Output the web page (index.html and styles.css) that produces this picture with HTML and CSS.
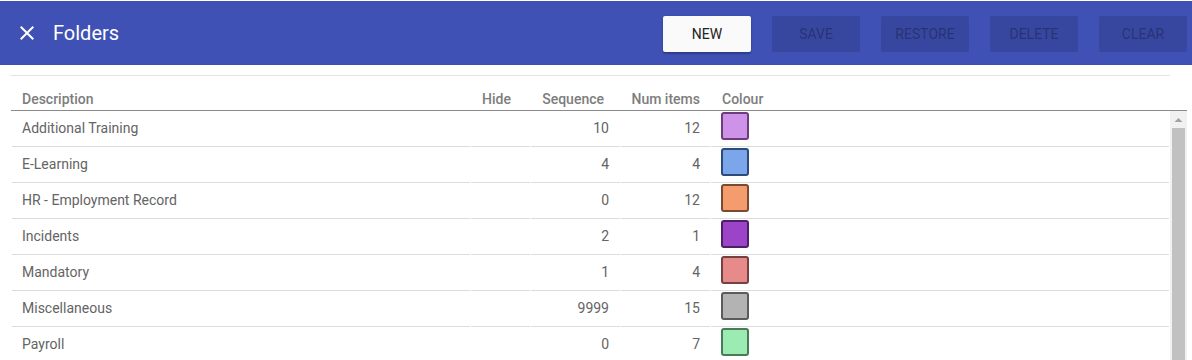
FILE: index.html
```html
<!DOCTYPE html>
<html lang='en'>

<head>
    <meta charset='UTF-8'>
    <meta name='viewport' content='width=device-width, initial-scale=1.0'>
    <title>Folders</title>
    <link rel="stylesheet" href="styles.css">
</head>

<body>
    <header class="toolbar">
        <button type="button" class="close-btn" aria-label="Close">
            <svg width="24" height="24" viewBox="0 0 24 24">
                <path d="M19 6.41 17.59 5 12 10.59 6.41 5 5 6.41 10.59 12 5 17.59 6.41 19 12 13.41 17.59 19 19 17.59 13.41 12z" fill="#fff"/>
            </svg>
        </button>
        <h1 class="title">Folders</h1>
        <div class="actions">
            <button type="button" class="btn btn-primary">NEW</button>
            <button type="button" class="btn" disabled>SAVE</button>
            <button type="button" class="btn" disabled>RESTORE</button>
            <button type="button" class="btn" disabled>DELETE</button>
            <button type="button" class="btn" disabled>CLEAR</button>
        </div>
    </header>
    <main class="content">
        <div class="grid-head">
            <table class="grid">
                <colgroup>
                    <col class="c-desc"><col class="c-hide"><col class="c-seq"><col class="c-num"><col>
                </colgroup>
                <thead>
                    <tr>
                        <th class="h-desc">Description</th>
                        <th class="h-hide">Hide</th>
                        <th class="h-seq">Sequence</th>
                        <th class="h-num">Num items</th>
                        <th class="h-col">Colour</th>
                    </tr>
                </thead>
            </table>
        </div>
        <div class="grid-body">
            <div class="grid-scroll">
                <table class="grid">
                    <colgroup>
                        <col class="c-desc"><col class="c-hide"><col class="c-seq"><col class="c-num"><col>
                    </colgroup>
                    <tbody id="rows"></tbody>
                </table>
            </div>
            <div class="scrollbar">
                <div class="scroll-arrow">
                    <svg width="17" height="17" viewBox="0 0 17 17"><path d="M4.5 11h8l-4-4z" fill="#a3a3a3"/></svg>
                </div>
                <div class="scroll-thumb"></div>
            </div>
        </div>
    </main>
    <script>
        const folders = [
            { name: 'Additional Training', seq: 10, items: 12, fill: '#ce93e8', edge: '#6a3f79' },
            { name: 'E-Learning', seq: 4, items: 4, fill: '#7ba7ea', edge: '#2e4a78' },
            { name: 'HR - Employment Record', seq: 0, items: 12, fill: '#f59c6e', edge: '#7b4a33' },
            { name: 'Incidents', seq: 2, items: 1, fill: '#9c44c8', edge: '#4d1f66' },
            { name: 'Mandatory', seq: 1, items: 4, fill: '#e68a8a', edge: '#744242' },
            { name: 'Miscellaneous', seq: 9999, items: 15, fill: '#b3b3b3', edge: '#5b5b5b' },
            { name: 'Payroll', seq: 0, items: 7, fill: '#9bebb3', edge: '#4a7a58' },
        ];

        const rows = document.querySelector('#rows');
        folders.forEach(f => {
            const tr = document.createElement('tr');
            tr.innerHTML = `
                <td class="d-desc">${f.name}</td>
                <td></td>
                <td class="d-seq">${f.seq}</td>
                <td class="d-num">${f.items}</td>
                <td class="d-col"><span class="swatch" style="background:${f.fill};border-color:${f.edge}"></span></td>`;
            rows.appendChild(tr);
        });
    </script>
</body>

</html>
```

FILE: styles.css
```css
* {
    padding: 0;
    margin: 0;
    box-sizing: border-box;
}

html,
body {
    height: 100%;
    overflow: hidden;
}

body {
    font-family: Roboto, "Liberation Sans", sans-serif;
    font-size: 14px;
    color: #646464;
    background: #fff;
    padding-top: 1px;
    display: flex;
    flex-direction: column;
}

button {
    font: inherit;
}

.toolbar {
    flex-shrink: 0;
    height: 64px;
    background-color: #3f51b5;
    display: flex;
    align-items: center;
    padding: 0 5px 0 15px;
}

.close-btn {
    width: 24px;
    height: 24px;
    border: none;
    background: none;
    display: flex;
    margin-right: 14px;
    margin-top: -1px;
}

.title {
    font-size: 20px;
    font-weight: 400;
    color: #fff;
    flex-grow: 1;
    margin-top: -1px;
}

.actions {
    display: flex;
    gap: 21px;
}

.btn {
    width: 88px;
    height: 36px;
    border: none;
    border-radius: 2px;
    font-size: 14px;
    font-weight: 400;
    background-color: rgba(0, 0, 0, .12);
    color: rgba(0, 0, 0, .3);
    margin-top: 1px;
}

.btn-primary {
    background-color: #fafafa;
    color: #222;
    box-shadow: 0 2px 2px rgba(0, 0, 0, .24), 0 0 2px rgba(0, 0, 0, .12);
}

.content {
    flex-grow: 1;
    min-height: 0;
    padding: 10px 5px 0 11px;
    display: flex;
    flex-direction: column;
}

.grid-head {
    border-bottom: 1px solid #8a8a8a;
}

.grid-head .grid {
    width: calc(100% - 17px);
    border-top: 1px solid #e3e3e3;
}

.grid {
    width: 100%;
    table-layout: fixed;
    border-collapse: separate;
    border-spacing: 1px 0;
}

.c-desc { width: 458px; }
.c-hide { width: 59px; }
.c-seq { width: 89px; }
.c-num { width: 89px; }

th {
    height: 34px;
    padding-bottom: 3px;
    vertical-align: bottom;
    font-weight: 500;
    color: #7d7d7d;
    text-align: right;
    white-space: nowrap;
}

.h-desc { text-align: left; padding-left: 10px; }
.h-hide { padding-right: 19px; }
.h-seq { padding-right: 16px; }
.h-num { padding-right: 10px; }
.h-col { text-align: left; padding-left: 11px; }

.grid-body {
    flex-grow: 1;
    min-height: 0;
    display: flex;
}

.grid-scroll {
    flex-grow: 1;
    overflow: hidden;
}

.scrollbar {
    width: 17px;
    flex-shrink: 0;
    background: #f1f1f1;
    display: flex;
    flex-direction: column;
}

.scroll-arrow {
    height: 17px;
    display: flex;
}

.scroll-thumb {
    flex-grow: 1;
    margin: 0 2px -20px 2px;
    background: #c1c1c1;
}

td {
    height: 36px;
    border-bottom: 1px solid #dcdcdc;
    white-space: nowrap;
    vertical-align: middle;
}

.d-desc { padding-left: 10px; padding-bottom: 2px; }
.d-seq { text-align: right; padding-right: 11px; padding-bottom: 2px; }
.d-num { text-align: right; padding-right: 10px; padding-bottom: 2px; }
.d-col { padding-left: 10px; vertical-align: top; padding-top: 1px; }

.swatch {
    display: block;
    width: 28px;
    height: 28px;
    border: 2px solid;
    border-radius: 3px;
}
```
